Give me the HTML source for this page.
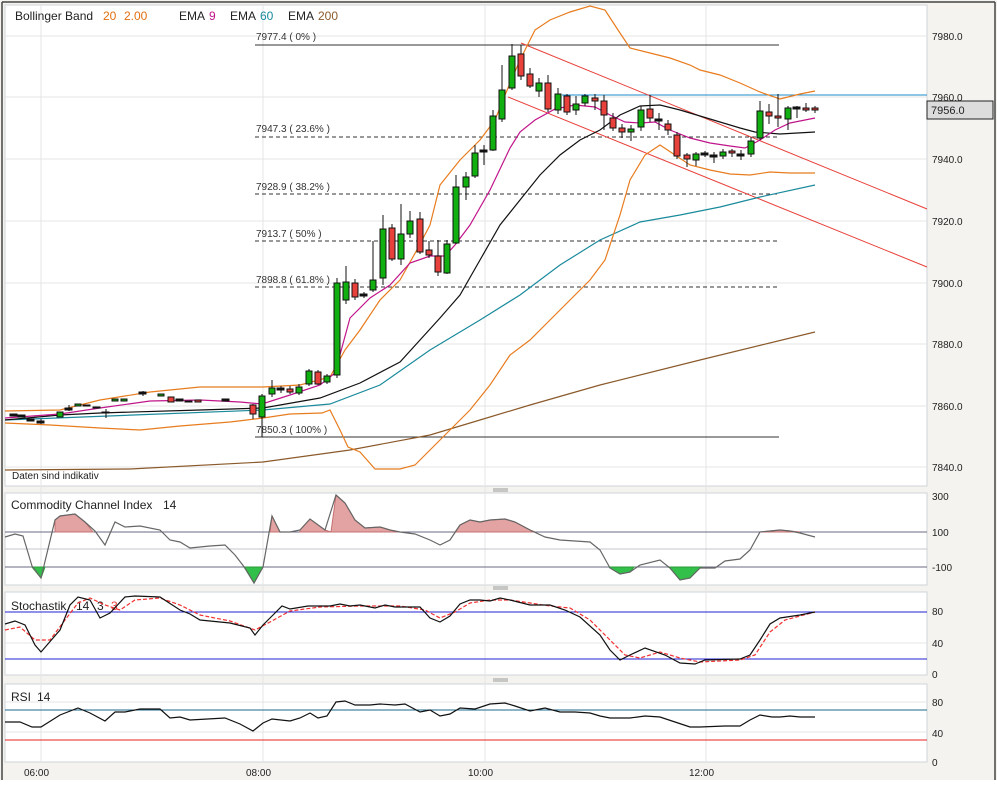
<!DOCTYPE html>
<html><head><meta charset="utf-8"><style>
html,body{margin:0;padding:0;background:#fff;}
body{width:997px;height:780px;overflow:hidden;font-family:"Liberation Sans",sans-serif;}
svg text{font-family:"Liberation Sans",sans-serif;}
</style></head><body>
<svg width="997" height="780" viewBox="0 0 997 780" xmlns="http://www.w3.org/2000/svg">
<rect x="0" y="0" width="997" height="780" fill="#f4f3ef"/>
<rect x="5" y="5" width="922" height="481" fill="#fff" stroke="#cfd4d8"/>
<rect x="5" y="493" width="922" height="92" fill="#fff" stroke="#cfd4d8"/>
<rect x="5" y="592" width="922" height="83" fill="#fff" stroke="#cfd4d8"/>
<rect x="5" y="684" width="922" height="78" fill="#fff" stroke="#cfd4d8"/>
<line x1="2" y1="2" x2="2" y2="780" stroke="#444" stroke-width="1.5"/>
<line x1="2" y1="2" x2="995" y2="2" stroke="#444" stroke-width="1.5"/>
<line x1="995" y1="2" x2="995" y2="780" stroke="#444" stroke-width="1.5"/>
<g stroke="#999"><line x1="493" y1="489" x2="508" y2="489"/><line x1="493" y1="491" x2="508" y2="491"/>
<line x1="493" y1="587" x2="508" y2="587"/><line x1="493" y1="589" x2="508" y2="589"/>
<line x1="493" y1="679" x2="508" y2="679"/><line x1="493" y1="681" x2="508" y2="681"/></g>
<g stroke="#e4e4e4">
<line x1="5" y1="36" x2="927" y2="36"/><line x1="5" y1="97" x2="927" y2="97"/><line x1="5" y1="159" x2="927" y2="159"/>
<line x1="5" y1="221" x2="927" y2="221"/><line x1="5" y1="283" x2="927" y2="283"/><line x1="5" y1="344" x2="927" y2="344"/>
<line x1="5" y1="406" x2="927" y2="406"/><line x1="5" y1="467" x2="927" y2="467"/>
<line x1="41" y1="5" x2="41" y2="762"/><line x1="263" y1="5" x2="263" y2="762"/><line x1="485" y1="5" x2="485" y2="762"/><line x1="706" y1="5" x2="706" y2="762"/>
<line x1="5" y1="549" x2="927" y2="549" stroke="#c0c4cc"/>
<line x1="5" y1="643" x2="927" y2="643"/>
<line x1="5" y1="702" x2="927" y2="702"/><line x1="5" y1="732" x2="927" y2="732"/>
</g>
<g stroke="#333" stroke-width="1">
<line x1="255" y1="45" x2="779" y2="45"/>
<line x1="255" y1="437" x2="779" y2="437"/>
<g stroke-dasharray="4,3"><line x1="255" y1="137" x2="779" y2="137"/><line x1="255" y1="194" x2="779" y2="194"/><line x1="255" y1="241" x2="779" y2="241"/><line x1="255" y1="287" x2="779" y2="287"/></g>
</g>
<g font-size="10" fill="#333">
<text x="256" y="40">7977.4 ( 0% )</text><text x="256" y="132">7947.3 ( 23.6% )</text>
<text x="256" y="190">7928.9 ( 38.2% )</text><text x="256" y="237">7913.7 ( 50% )</text>
<text x="256" y="283">7898.8 ( 61.8% )</text><text x="256" y="433">7850.3 ( 100% )</text></g>
<line x1="562" y1="95" x2="927" y2="95" stroke="#1e88c8"/>
<line x1="521" y1="43" x2="927" y2="209" stroke="#e8403a"/>
<line x1="508" y1="97" x2="927" y2="267" stroke="#e8403a"/>
<g fill="none" stroke-width="1.2">
<polyline stroke="#8b5a2b" points="5,470 130,469 263,462 350,450 430,435 480,420 530,405 600,385 700,360 815,332"/>
<polyline stroke="#1a8a9c" points="5,420 263,410 330,404 380,385 430,350 480,320 520,295 560,265 600,240 640,222 680,215 720,207 760,197 815,185"/>
<polyline stroke="#e87c1e" points="5,411 60,410 100,400 150,392 200,387 263,387 300,385 330,377 345,350 360,330 380,300 400,280 418,248 430,225 440,185 460,160 480,140 495,120 505,95 520,60 535,30 550,20 570,12 590,6 605,10 618,30 630,48 650,53 670,58 690,65 700,70 720,75 740,83 760,92 780,99 800,94 815,91"/>
<polyline stroke="#e87c1e" points="5,423 50,425 100,428 140,430 180,426 230,422 263,418 290,414 322,413 330,410 340,430 348,447 360,452 375,469 400,469 415,465 430,450 450,430 470,410 490,385 510,355 530,340 550,320 570,300 590,280 605,260 620,215 630,180 645,155 660,145 675,155 690,165 710,170 730,174 750,175 770,172 790,173 815,173"/>
<polyline stroke="#111" points="5,420 60,415 100,413 200,410 263,408 320,398 360,383 400,362 440,318 460,295 480,260 500,225 520,200 540,175 560,155 580,140 600,130 620,115 640,106 660,105 680,110 700,116 720,122 740,128 755,132 780,134 815,132"/>
<polyline stroke="#c0158a" points="5,418 60,414 100,408 150,401 200,400 240,402 262,404 290,395 320,385 335,373 350,318 370,298 390,285 410,263 430,256 445,256 455,245 470,225 490,190 510,148 520,132 535,120 555,109 575,105 595,107 610,115 625,122 640,123 655,122 670,130 690,138 710,143 730,146 745,148 760,140 775,130 790,123 815,118"/>
</g>
<g stroke="#111" stroke-width="1">
<g>
<line x1="41" y1="419" x2="41" y2="424"/><line x1="69" y1="405" x2="69" y2="411"/><line x1="106" y1="409" x2="106" y2="418"/><line x1="143" y1="391" x2="143" y2="396"/>
<line x1="253" y1="404" x2="253" y2="419"/><line x1="262" y1="394" x2="262" y2="437"/><line x1="272" y1="380" x2="272" y2="397"/><line x1="281" y1="386" x2="281" y2="393"/><line x1="290" y1="386" x2="290" y2="394"/><line x1="299" y1="384" x2="299" y2="395"/><line x1="309" y1="369" x2="309" y2="386"/><line x1="318" y1="370" x2="318" y2="385"/><line x1="327" y1="374" x2="327" y2="384"/>
<line x1="337" y1="278" x2="337" y2="378"/><line x1="346" y1="266" x2="346" y2="304"/><line x1="355" y1="279" x2="355" y2="300"/><line x1="364" y1="292" x2="364" y2="298"/><line x1="373" y1="241" x2="373" y2="292"/><line x1="383" y1="215" x2="383" y2="285"/><line x1="392" y1="224" x2="392" y2="261"/><line x1="401" y1="204" x2="401" y2="265"/><line x1="410" y1="211" x2="410" y2="238"/><line x1="420" y1="212" x2="420" y2="254"/><line x1="429" y1="241" x2="429" y2="258"/><line x1="438" y1="240" x2="438" y2="276"/><line x1="447" y1="240" x2="447" y2="274"/><line x1="456" y1="175" x2="456" y2="244"/><line x1="466" y1="172" x2="466" y2="200"/><line x1="475" y1="145" x2="475" y2="178"/><line x1="484" y1="145" x2="484" y2="165"/><line x1="493" y1="110" x2="493" y2="151"/><line x1="502" y1="65" x2="502" y2="122"/><line x1="512" y1="44" x2="512" y2="90"/><line x1="521" y1="45" x2="521" y2="80"/><line x1="530" y1="68" x2="530" y2="88"/><line x1="539" y1="78" x2="539" y2="97"/><line x1="548" y1="75" x2="548" y2="112"/><line x1="558" y1="88" x2="558" y2="114"/><line x1="567" y1="94" x2="567" y2="115"/><line x1="576" y1="96" x2="576" y2="115"/><line x1="585" y1="94" x2="585" y2="106"/><line x1="595" y1="94" x2="595" y2="110"/><line x1="604" y1="95" x2="604" y2="130"/><line x1="613" y1="113" x2="613" y2="131"/><line x1="622" y1="124" x2="622" y2="138"/><line x1="631" y1="125" x2="631" y2="141"/><line x1="641" y1="106" x2="641" y2="131"/><line x1="650" y1="95" x2="650" y2="122"/><line x1="659" y1="113" x2="659" y2="130"/><line x1="668" y1="120" x2="668" y2="135"/><line x1="677" y1="132" x2="677" y2="159"/><line x1="687" y1="153" x2="687" y2="167"/><line x1="696" y1="152" x2="696" y2="166"/><line x1="705" y1="151" x2="705" y2="157"/><line x1="714" y1="152" x2="714" y2="163"/><line x1="723" y1="149" x2="723" y2="159"/><line x1="732" y1="149" x2="732" y2="157"/><line x1="741" y1="150" x2="741" y2="160"/><line x1="751" y1="137" x2="751" y2="157"/><line x1="760" y1="101" x2="760" y2="140"/><line x1="769" y1="104" x2="769" y2="124"/><line x1="778" y1="94" x2="778" y2="127"/><line x1="788" y1="106" x2="788" y2="130"/><line x1="797" y1="106" x2="797" y2="118"/><line x1="806" y1="103" x2="806" y2="112"/><line x1="815" y1="106" x2="815" y2="113"/>
</g>
<g fill="#111">
<rect x="10" y="414" width="7" height="2"/><rect x="18" y="415" width="7" height="2"/><rect x="27" y="419" width="7" height="2"/><rect x="37" y="421" width="7" height="2"/><rect x="65" y="408" width="7" height="2"/><rect x="83" y="405" width="7" height="1"/><rect x="93" y="407" width="7" height="1"/><rect x="102" y="412" width="7" height="1"/><rect x="139" y="392" width="7" height="2"/><rect x="176" y="399" width="7" height="2"/><rect x="185" y="401" width="7" height="1"/><rect x="222" y="399" width="7" height="2"/><rect x="277" y="388" width="7" height="2"/><rect x="360" y="294" width="7" height="2"/><rect x="480" y="150" width="7" height="2"/><rect x="655" y="119" width="7" height="2"/><rect x="701" y="153" width="7" height="2"/><rect x="710" y="155" width="7" height="2"/><rect x="737" y="154" width="7" height="2"/><rect x="793" y="107" width="7" height="2"/>
</g>
<g fill="#10b010">
<rect x="57" y="412" width="6" height="5"/><rect x="75" y="404" width="6" height="2"/><rect x="112" y="399" width="6" height="2"/><rect x="121" y="399" width="6" height="2"/><rect x="158" y="394" width="6" height="2"/>
<rect x="259" y="396" width="6" height="21"/><rect x="269" y="388" width="6" height="6"/><rect x="296" y="387" width="6" height="6"/><rect x="306" y="371" width="6" height="13"/><rect x="324" y="376" width="6" height="6"/>
<rect x="334" y="283" width="6" height="92"/><rect x="343" y="282" width="6" height="18"/><rect x="370" y="280" width="6" height="10"/><rect x="380" y="229" width="6" height="49"/><rect x="398" y="234" width="6" height="25"/><rect x="407" y="221" width="6" height="13"/><rect x="444" y="244" width="6" height="29"/><rect x="453" y="187" width="6" height="56"/><rect x="463" y="177" width="6" height="10"/><rect x="472" y="153" width="6" height="23"/><rect x="490" y="116" width="6" height="34"/><rect x="499" y="90" width="6" height="29"/><rect x="509" y="56" width="6" height="32"/><rect x="536" y="83" width="6" height="8"/><rect x="555" y="94" width="6" height="16"/><rect x="573" y="104" width="6" height="6"/><rect x="582" y="96" width="6" height="7"/><rect x="628" y="129" width="6" height="3"/><rect x="638" y="110" width="6" height="17"/><rect x="693" y="154" width="6" height="6"/><rect x="720" y="152" width="6" height="4"/><rect x="748" y="141" width="6" height="13"/><rect x="757" y="111" width="6" height="27"/><rect x="785" y="108" width="6" height="11"/>
</g>
<g fill="#e8403a">
<rect x="168" y="397" width="6" height="5"/><rect x="195" y="400" width="6" height="2"/><rect x="250" y="405" width="6" height="9"/><rect x="287" y="389" width="6" height="3"/><rect x="315" y="372" width="6" height="12"/>
<rect x="352" y="283" width="6" height="14"/><rect x="389" y="228" width="6" height="31"/><rect x="417" y="219" width="6" height="33"/><rect x="426" y="250" width="6" height="5"/><rect x="435" y="256" width="6" height="16"/><rect x="518" y="54" width="6" height="22"/><rect x="527" y="74" width="6" height="12"/><rect x="545" y="83" width="6" height="26"/><rect x="564" y="96" width="6" height="16"/><rect x="592" y="98" width="6" height="3"/><rect x="601" y="101" width="6" height="14"/><rect x="610" y="118" width="6" height="10"/><rect x="619" y="128" width="6" height="4"/><rect x="647" y="109" width="6" height="9"/><rect x="665" y="124" width="6" height="6"/><rect x="674" y="135" width="6" height="21"/><rect x="684" y="155" width="6" height="4"/><rect x="729" y="151" width="6" height="2"/><rect x="766" y="112" width="6" height="4"/><rect x="775" y="116" width="6" height="2"/><rect x="803" y="108" width="6" height="2"/><rect x="812" y="108" width="6" height="2"/>
</g>
</g>
<g font-size="12" fill="#222">
<text x="15" y="20">Bollinger Band</text>
<text x="103" y="20" fill="#e07010">20</text><text x="124" y="20" fill="#e07010">2.00</text>
<text x="179" y="20">EMA</text><text x="209" y="20" fill="#c0158a">9</text>
<text x="230" y="20">EMA</text><text x="260" y="20" fill="#1a8a9c">60</text>
<text x="288" y="20">EMA</text><text x="318" y="20" fill="#8b5a2b">200</text>
<text x="11" y="509">Commodity Channel Index</text><text x="163" y="509">14</text>
<text x="11" y="610">Stochastik</text><text x="76" y="610">14</text><text x="97" y="610">3</text><text x="111" y="610" fill="#e8403a">3</text>
<text x="11" y="701">RSI</text><text x="37" y="701">14</text>
</g>
<text x="12" y="479" font-size="10" fill="#222">Daten sind indikativ</text>
<g font-size="10" fill="#222">
<text x="932" y="40">7980.0</text><text x="932" y="101">7960.0</text><text x="932" y="163">7940.0</text><text x="932" y="225">7920.0</text><text x="932" y="287">7900.0</text><text x="932" y="348">7880.0</text><text x="932" y="410">7860.0</text><text x="932" y="471">7840.0</text>
<text x="932" y="500">300</text><text x="932" y="536">100</text><text x="932" y="571">-100</text>
<text x="932" y="615">80</text><text x="932" y="647">40</text><text x="932" y="678">0</text>
<text x="932" y="706">80</text><text x="932" y="737">40</text><text x="932" y="766">0</text>
<text x="24" y="776">06:00</text><text x="246" y="776">08:00</text><text x="468" y="776">10:00</text><text x="689" y="776">12:00</text>
</g>
<rect x="927" y="101" width="66" height="18" fill="#dcdcdc" stroke="#222"/>
<text x="931" y="114" font-size="11" fill="#222">7956.0</text>
<line x1="5" y1="532" x2="927" y2="532" stroke="#6b6b85"/>
<line x1="5" y1="567" x2="927" y2="567" stroke="#6b6b85"/>
<g fill="#e4a3a3" stroke="#c47070">
<polygon points="55,532 55,520 60,516 75,514 85,522 93,532"/>
<polygon points="270,532 272,516 280,532"/>
<polygon points="300,532 300,530 310,519 325,530 331,532 336,495 345,503 355,520 365,528 380,527 390,530 400,532"/>
<polygon points="455,532 460,525 470,520 480,522 490,520 505,519 515,522 530,530 535,532"/>
<polygon points="760,532 770,531 780,530 790,531 800,532"/>
</g>
<g fill="#33c04a" stroke="#2a9a3a">
<polygon points="32,567 41,578 45,567"/>
<polygon points="244,567 254,583 263,567"/>
<polygon points="609,567 610,568 620,574 630,572 634,567"/>
<polygon points="668,567 670,568 680,580 690,578 700,568 702,567"/>
</g>
<polyline fill="none" stroke="#666" stroke-width="1.2" points="5,537 15,534 23,536 32,566 41,578 55,520 60,516 75,514 85,522 95,531 105,545 115,522 125,527 140,526 160,530 170,540 180,542 190,548 210,546 225,545 235,555 245,568 254,583 263,567 272,516 280,532 290,532 300,530 310,519 325,530 336,495 345,503 355,520 365,528 380,527 390,530 400,532 415,534 430,540 440,545 450,540 460,525 470,520 480,522 490,520 505,519 515,522 530,530 545,537 560,540 575,541 590,542 600,550 610,568 620,574 630,572 640,565 660,560 670,568 680,580 690,578 700,568 715,568 725,561 740,559 750,550 760,532 770,531 780,530 790,531 800,533 815,537"/>
<line x1="5" y1="612" x2="927" y2="612" stroke="#2020d0"/>
<line x1="5" y1="659" x2="927" y2="659" stroke="#2020d0"/>
<polyline fill="none" stroke="#f03030" stroke-dasharray="4,2" stroke-width="1.2" points="5,630 20,627 35,640 50,640 65,620 78,603 90,598 105,605 120,610 135,600 160,598 180,605 200,615 230,621 255,630 270,622 290,611 320,607 360,606 400,606 425,610 440,618 455,612 470,603 490,600 510,600 530,603 550,606 570,608 590,620 610,640 625,655 640,658 660,652 680,658 700,662 740,660 755,655 770,632 785,620 815,612"/>
<polyline fill="none" stroke="#111" stroke-width="1.2" points="5,624 15,621 25,625 35,645 41,652 60,630 70,605 78,597 90,600 100,618 110,613 125,597 135,596 160,597 180,610 190,614 200,620 230,623 250,628 255,635 263,625 275,613 282,606 290,609 308,606 330,606 340,604 350,606 360,605 375,608 385,605 395,607 420,607 430,618 440,622 450,616 460,604 470,600 480,600 490,601 500,598 510,600 530,605 550,605 565,610 580,617 600,635 610,650 620,660 630,655 645,648 665,655 680,663 695,664 705,660 740,659 750,655 760,640 770,624 780,618 800,615 815,612"/>
<line x1="5" y1="710" x2="927" y2="710" stroke="#1a6a8a"/>
<line x1="5" y1="740" x2="927" y2="740" stroke="#e82020"/>
<polyline fill="none" stroke="#111" stroke-width="1.2" points="5,722 20,722 32,727 41,727 60,715 78,708 90,713 105,721 115,712 125,712 140,709 160,709 170,718 180,717 190,720 225,718 240,724 253,731 263,723 272,719 290,721 300,718 310,713 318,718 327,716 336,702 345,701 355,705 370,705 380,704 395,705 405,704 420,712 430,710 440,716 450,714 460,708 475,709 490,704 505,703 515,706 530,711 545,708 560,712 575,712 590,713 600,716 610,718 630,718 645,716 660,717 675,722 690,727 700,727 725,726 740,726 750,720 760,715 772,717 780,717 790,716 800,717 815,717"/>
</svg>
</body></html>
